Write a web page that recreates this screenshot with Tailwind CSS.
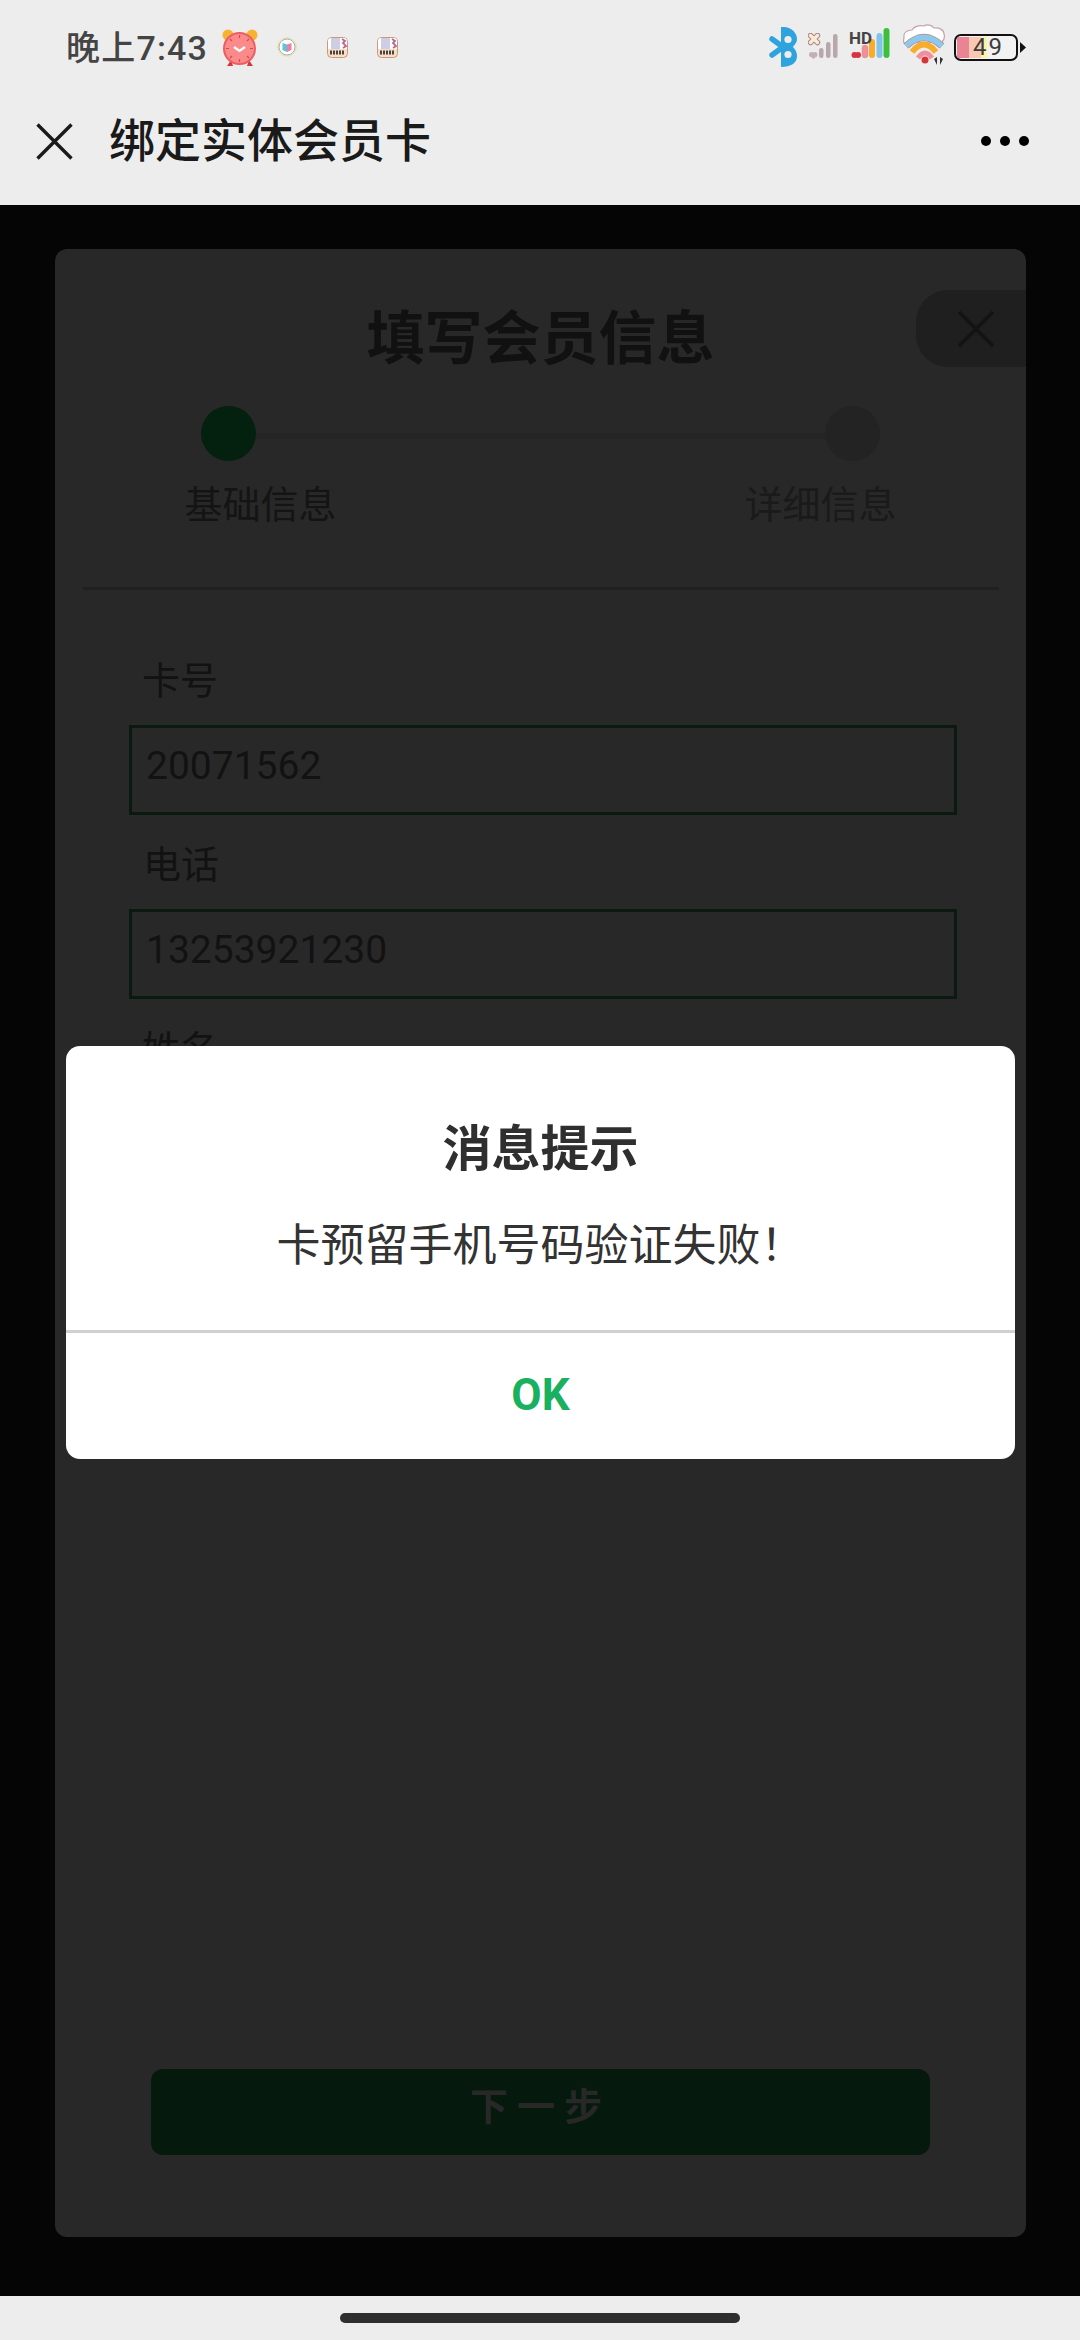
<!DOCTYPE html>
<html><head><meta charset="utf-8"><script src="https://cdn.jsdelivr.net/npm/@tailwindcss/browser@4"></script></head>
<body class="w-[1080px] h-[2340px] overflow-hidden bg-[#ededed] font-['Roboto','Noto_Sans_CJK_SC',sans-serif]">
<div class="relative w-[1080px] h-[2340px] flex flex-col">
  <!-- status bar -->
  <div class="h-[90px] shrink-0 flex items-start">
    <span class="ml-[66px] mt-[28px] w-[156px] shrink-0 text-[34px] leading-[40px] font-medium text-[#444] tracking-[1.2px] whitespace-nowrap">晚上7:43</span>
    <svg class="mt-[29px] shrink-0" width="36" height="37" viewBox="0 0 36 37"><circle cx="6" cy="6" r="5.500" fill="#f8b133"/><circle cx="30" cy="6" r="5.500" fill="#f8b133"/><path d="M9 31l-4 6h6zM27 31l4 6h-6z" fill="#d9363e"/><circle cx="17.500" cy="19.500" r="15.500" fill="#fb8a8b" stroke="#ea5f62" stroke-width="2"/><path d="M17.500 6v3M17.500 30v3M4 19.500h3M28 19.500h3M8 10l2 2M27 10l-2 2M8 29l2-2M27 29l-2-2" stroke="#d8484c" stroke-width="1.200"/><path d="M12 18l5.500 4 5.500-4" fill="none" stroke="#fff" stroke-width="2.200"/></svg>
    <svg class="ml-[19px] mt-[37px] shrink-0" width="20" height="20" viewBox="0 0 20 20"><circle cx="10" cy="10" r="9.200" fill="#fff" stroke="#dede8e" stroke-width="1"/><circle cx="10" cy="10" r="8" fill="none" stroke="#555" stroke-width="0.500"/><path d="M5.500 6l4.500 1.500v7.500l-4.500-2z" fill="#5cc3d9"/><path d="M14.500 6l-4.500 1.500v7.500l4.500-2z" fill="#ef7fa0"/></svg>
    <svg class="ml-[30px] mt-[37px] shrink-0" width="21" height="21" viewBox="0 0 21 21"><rect x="0.500" y="0.500" width="20" height="20" rx="4" fill="#fbdcc4" stroke="#c89878"/><path d="M1 4a3 3 0 0 1 3-3h13a3 3 0 0 1 3 3v8H1z" fill="#fff"/><rect x="4" y="1" width="9" height="11" fill="#cfcde4"/><path d="M15 2l3 2-2 2 3 3-3 2" stroke="#b86a8c" stroke-width="1.800" fill="none"/><path d="M3 15.500h15" stroke="#444" stroke-width="4" stroke-dasharray="2 1"/></svg>
    <svg class="ml-[29px] mt-[37px] shrink-0" width="21" height="21" viewBox="0 0 21 21"><rect x="0.500" y="0.500" width="20" height="20" rx="4" fill="#fbdcc4" stroke="#c89878"/><path d="M1 4a3 3 0 0 1 3-3h13a3 3 0 0 1 3 3v8H1z" fill="#fff"/><rect x="4" y="1" width="9" height="11" fill="#cfcde4"/><path d="M15 2l3 2-2 2 3 3-3 2" stroke="#b86a8c" stroke-width="1.800" fill="none"/><path d="M3 15.500h15" stroke="#444" stroke-width="4" stroke-dasharray="2 1"/></svg>
    <!-- right icons -->
    <svg class="ml-auto mt-[27px] shrink-0" width="29" height="40" viewBox="0 0 29 40"><path d="M12 0C22-1 28 6 28 12c0 4-3 6-4 8 2 2 4 5 4 9 0 7-6 11-16 11z" fill="#2ea3de"/><path d="M3 12l11 8-11 8" fill="none" stroke="#2ea3de" stroke-width="5.500" stroke-linecap="round"/><circle cx="19" cy="12.500" r="3.600" fill="#ededed"/><circle cx="19" cy="27.500" r="3.600" fill="#ededed"/></svg>
    <svg class="ml-[10px] mt-[33px] shrink-0" width="30" height="26" viewBox="0 0 30 26"><path d="M2.500 2.500l7 7M9.500 2.500l-7 7" stroke="#a98a85" stroke-width="5.500" stroke-linecap="round"/><path d="M2.500 2.500l7 7M9.500 2.500l-7 7" stroke="#fbe8d6" stroke-width="3.500" stroke-linecap="round"/><circle cx="3.500" cy="21.500" r="2.500" fill="#c4b0b4"/><circle cx="7" cy="21.500" r="2.500" fill="#c4b0b4"/><path d="M2 23l3.500 3 3.500-3z" fill="#c4b0b4"/><rect x="11" y="15" width="4.500" height="10" rx="2.200" fill="#b8a8ac"/><rect x="18" y="9" width="4.500" height="16" rx="2.200" fill="#b8a8ac"/><rect x="25" y="1" width="4.500" height="24" rx="2.200" fill="#b8a8ac"/></svg>
    <div class="relative ml-[11px] mt-[28px] w-[41px] h-[32px] shrink-0">
      <svg class="block" width="41" height="32" viewBox="0 0 41 32"><circle cx="5.500" cy="27" r="3" fill="#d8343c"/><circle cx="9" cy="27" r="3" fill="#d8343c"/><rect x="13" y="17" width="6" height="13" rx="3" fill="#f28f98" stroke="#c89090" stroke-width="0.500"/><rect x="20" y="11" width="6" height="19" rx="3" fill="#f8ac2a"/><rect x="27.500" y="5" width="6" height="25" rx="3" fill="#80c4ee"/><rect x="34.500" y="0" width="6" height="30" rx="3" fill="#3cc03c"/></svg>
      <span class="absolute left-0 top-[0px] text-[17px] leading-[20px] font-bold text-[#444]">HD</span>
    </div>
    <svg class="ml-[12px] mt-[24px] shrink-0" width="44" height="41" viewBox="0 0 44 41"><path d="M2 13c-1-5 4-7 8-7 2-4 8-5 12-4 3-2 8-1 10 2 5-1 10 2 10 6 1 3 0 6-2 8l-38 1c-1-2 0-4 0-6z" fill="#fff" stroke="#c4a4a8" stroke-width="1.200"/><path d="M4 22Q22 5 40 22" fill="none" stroke="#b88a88" stroke-width="7"/><path d="M4 22Q22 5 40 22" fill="none" stroke="#8cc9ec" stroke-width="5.500"/><path d="M10 28Q22 13 34 28" fill="none" stroke="#f8ac2a" stroke-width="6"/><path d="M16 34Q23 24 30 34" fill="none" stroke="#f28f98" stroke-width="5"/><circle cx="23" cy="36" r="3.500" fill="#d8343c"/><path d="M32 35l3-2v8zM41 35l-3-2v8z" fill="#333"/></svg>
    <div class="relative ml-[8px] mt-[34px] w-[64px] h-[27px] shrink-0 rounded-[7px] border-2 border-[#111] overflow-hidden flex pl-[1px] py-[1px] bg-[#f2f2f2]">
      <div class="w-[12px] bg-[#e98495]"></div><div class="w-[12px] bg-[#f9c8b5]"></div><div class="w-[6px] bg-[#fdf3a0]"></div>
      <span class="absolute left-[17px] top-[-3px] text-[24px] leading-[28px] text-[#3c3c3c] tracking-[2px]">49</span>
    </div>
    <svg class="ml-[2px] mr-[54px] mt-[42px] shrink-0" width="6" height="11" viewBox="0 0 6 11"><path d="M0 0l6 5.500-6 5.500z" fill="#111"/></svg>
  </div>
  <!-- title bar -->
  <div class="h-[115px] shrink-0 flex items-center pb-[13px]">
    <svg class="ml-[36px] shrink-0" width="37" height="37" viewBox="0 0 37 37"><path d="M1.500 1.500l34 34M35.500 1.500l-34 34" stroke="#1a1a1a" stroke-width="3.400"/></svg>
    <span class="ml-[36px] text-[46px] leading-[56px] text-[#1a1a1a] font-medium">绑定实体会员卡</span>
    <div class="ml-auto mr-[51px] flex gap-[9px]"><i class="block w-[10px] h-[10px] rounded-full bg-black"></i><i class="block w-[10px] h-[10px] rounded-full bg-black"></i><i class="block w-[10px] h-[10px] rounded-full bg-black"></i></div>
  </div>
  <!-- page under dimmed mask -->
  <div class="h-[2091px] shrink-0 bg-[#050505] pt-[44px] pl-[55px]">
    <div class="relative w-[971px] h-[1988px] rounded-[12px] bg-[#282828] flex flex-col items-center">
      <div class="absolute right-0 top-[41px] w-[110px] h-[77px] rounded-l-[32px] bg-[#1f1f1f] flex items-center justify-center pl-[10px]">
        <svg width="38" height="38" viewBox="0 0 38 38"><path d="M2 2l34 34M36 2L2 36" stroke="#131313" stroke-width="3.500"/></svg>
      </div>
      <div class="mt-[58px] text-[58px] leading-[64px] font-bold text-[#111]">填写会员信息</div>
      <div class="w-[679px] mt-[35px] flex items-center">
        <i class="block w-[55px] h-[55px] rounded-full bg-[#04200f] shrink-0"></i>
        <i class="block flex-1 h-[6px] bg-[#242424] mt-[5px]"></i>
        <i class="block w-[55px] h-[55px] rounded-full bg-[#232323] shrink-0"></i>
      </div>
      <div class="w-[712px] mt-[18px] flex justify-between text-[38px] leading-[52px] text-[#141414]"><span>基础信息</span><span class="text-[#1a1a1a]">详细信息</span></div>
      <div class="w-[916px] h-[3px] bg-[#202020] mt-[56px]"></div>
      <div class="w-[828px] mt-[69px] ml-[74px] self-start flex flex-col text-[#121212]">
        <div class="pl-[13px] text-[38px] leading-[44px]">卡号</div>
        <div class="mt-[22px] h-[90px] border-[3px] border-[#0a1a11] pl-[14px] text-[39px] leading-[76px]">20071562</div>
        <div class="mt-[28px] pl-[14px] text-[38px] leading-[44px]">电话</div>
        <div class="mt-[22px] h-[90px] border-[3px] border-[#0a1a11] pl-[14px] text-[39px] leading-[76px]">13253921230</div>
        <div class="mt-[29px] pl-[13px] text-[38px] leading-[44px]">姓名</div>
      </div>
      <div class="absolute left-[96px] top-[1820px] w-[779px] h-[86px] rounded-[12px] bg-[#051a0c] flex items-center justify-center pb-[9px] text-[38px] font-bold text-[#282828] tracking-[9px]">下一步</div>
    </div>
  </div>
  <!-- home bar -->
  <div class="flex-1 flex justify-center pt-[17px]"><i class="block w-[400px] h-[10px] rounded-full bg-[#2e2e2e]"></i></div>
  <!-- alert -->
  <div class="absolute left-[66px] top-[1046px] w-[949px] h-[413px] rounded-[14px] bg-white flex flex-col">
    <div class="h-[284px] shrink-0 flex flex-col items-center">
      <div class="mt-[72px] text-[49px] leading-[64px] font-bold text-[#2f2f2f]">消息提示</div>
      <div class="mt-[34px] text-[44px] leading-[60px] text-[#333]">卡预留手机号码验证失败！</div>
    </div>
    <div class="h-[3px] shrink-0 bg-[#d0d0d0]"></div>
    <div class="flex-1 flex items-center justify-center text-[44px] font-bold text-[#19b05f] pb-[2px]">OK</div>
  </div>
</div>
</body></html>
